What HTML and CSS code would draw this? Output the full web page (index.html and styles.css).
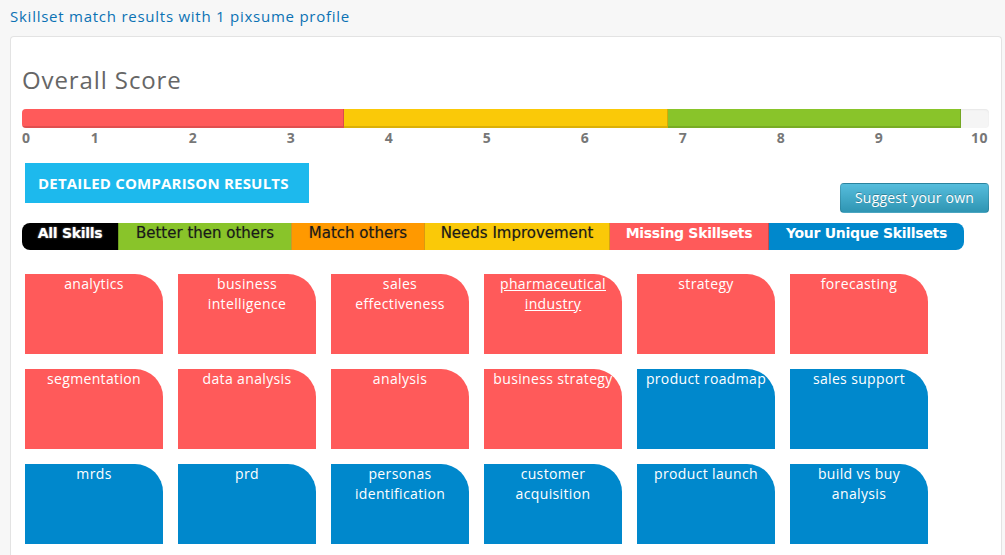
FILE: index.html
```html
<!DOCTYPE html>
<html>
<head>
<meta charset="utf-8">
<link rel="stylesheet" href="styles.css">
</head>
<body>
<div class="page-title">Skillset match results with 1 pixsume profile</div>
<div class="card">
  <h2 class="score-title">Overall Score</h2>
  <div class="bar">
    <div class="seg seg-red" style="width:33.33%"></div>
    <div class="seg seg-yellow" style="width:33.44%"></div>
    <div class="seg seg-green" style="width:30.33%"></div>
  </div>
  <div class="scale">
    <span class="tick first">0</span>
    <span class="tick">1</span>
    <span class="tick">2</span>
    <span class="tick">3</span>
    <span class="tick">4</span>
    <span class="tick">5</span>
    <span class="tick">6</span>
    <span class="tick">7</span>
    <span class="tick">8</span>
    <span class="tick">9</span>
    <span class="tick last">10</span>
  </div>
  <div class="actions">
    <div class="detail-btn">DETAILED COMPARISON RESULTS</div>
    <div class="suggest-btn">Suggest your own</div>
  </div>
  <div class="tabs">
    <div class="tab tab-all">All Skills</div>
    <div class="tab tab-better">Better then others</div>
    <div class="tab tab-match">Match others</div>
    <div class="tab tab-needs">Needs Improvement</div>
    <div class="tab tab-missing">Missing Skillsets</div>
    <div class="tab tab-unique">Your Unique Skillsets</div>
  </div>
  <div class="tiles">
    <div class="tile red">analytics</div>
    <div class="tile red">business intelligence</div>
    <div class="tile red">sales effectiveness</div>
    <div class="tile red"><a href="#">pharmaceutical industry</a></div>
    <div class="tile red">strategy</div>
    <div class="tile red">forecasting</div>
    <div class="tile red">segmentation</div>
    <div class="tile red">data analysis</div>
    <div class="tile red">analysis</div>
    <div class="tile red">business strategy</div>
    <div class="tile blue">product roadmap</div>
    <div class="tile blue">sales support</div>
    <div class="tile blue">mrds</div>
    <div class="tile blue">prd</div>
    <div class="tile blue">personas identification</div>
    <div class="tile blue">customer acquisition</div>
    <div class="tile blue">product launch</div>
    <div class="tile blue">build vs buy analysis</div>
  </div>
</div>
</body>
</html>
```

FILE: styles.css
```css
html, body {
  margin: 0;
  padding: 0;
}
body {
  background: #f7f7f7;
  font-family: "Open Sans", "Noto Sans", sans-serif;
  overflow: hidden;
  height: 555px;
}
.page-title {
  padding: 6px 10px 0 10px;
  height: 24px;
  line-height: 20px;
  font-size: 15px;
  letter-spacing: 0.75px;
  color: #0b72b4;
}
.card {
  margin: 6px 3px 0 10px;
  background: #fff;
  border: 1px solid #e3e3e3;
  border-bottom: none;
  border-radius: 4px 4px 0 0;
  padding: 27px 12px 0 11px;
  height: 492px;
  overflow: hidden;
}
.score-title {
  margin: 0;
  font-size: 24px;
  font-weight: 400;
  letter-spacing: 0.9px;
  line-height: 32px;
  color: #666;
}
.bar {
  margin-top: 13px;
  height: 19px;
  display: flex;
  background: #f5f5f5;
  border-radius: 4px;
  overflow: hidden;
  box-shadow: inset 0 1px 2px rgba(0,0,0,0.06);
}
.seg {
  height: 100%;
  box-sizing: border-box;
  border-bottom: 2px solid rgba(0,0,0,0.12);
  border-right: 1px solid rgba(0,0,0,0.15);
}
.seg-red { background: #ff5a5a; }
.seg-yellow { background: #fac908; }
.seg-green { background: #89c42a; }
.scale {
  display: flex;
  height: 19px;
  line-height: 19px;
  font-size: 14px;
  letter-spacing: 0.5px;
  font-weight: 700;
  color: #777;
}
.tick {
  width: 98px;
  text-align: center;
}
.tick.first {
  width: 24px;
  text-align: left;
}
.tick.last {
  flex: 1;
  text-align: right;
  padding-right: 1px;
}
.actions {
  margin-top: 16px;
  height: 50px;
  display: flex;
  justify-content: space-between;
}
.detail-btn {
  align-self: flex-start;
  margin-left: 3px;
  width: 284px;
  height: 40px;
  box-sizing: border-box;
  padding-left: 13px;
  line-height: 40px;
  background: #1db9ed;
  color: #fff;
  font-size: 15px;
  letter-spacing: 0.2px;
  font-weight: 700;
}
.suggest-btn {
  align-self: flex-end;
  width: 149px;
  height: 30px;
  box-sizing: border-box;
  line-height: 28px;
  text-align: center;
  font-size: 14px;
  letter-spacing: 0.2px;
  color: #fff;
  border-radius: 4px;
  border: 1px solid rgba(0,0,0,0.12);
  background: linear-gradient(#56bddc, #2f95b3);
  text-shadow: 0 -1px 0 rgba(0,0,0,0.25);
}
.tabs {
  margin-top: 10px;
  display: flex;
  height: 27px;
}
.tab {
  height: 27px;
  line-height: 21px;
  text-align: center;
  font-family: "DejaVu Sans", Verdana, sans-serif;
  font-size: 15px;
  color: #1a1a1a;
  box-sizing: border-box;
  text-shadow: 0 0 1px rgba(0,0,0,0.35);
}
.tab-all {
  width: 96px;
  background: #000;
  color: #fff;
  font-size: 14px;
  letter-spacing: -0.3px;
  font-weight: 700;
  border-radius: 8px 0 0 8px;
  text-shadow: 0 0 2px rgba(255,255,255,0.6);
}
.tab-better {
  width: 173px;
  background: #89c42a;
  border-left: 1px solid #6e9e22;
}
.tab-match {
  width: 133px;
  background: #ff9900;
  border-left: 1px solid #c99a2a;
}
.tab-needs {
  width: 185px;
  background: #fac908;
  border-left: 1px solid #d99a10;
}
.tab-missing {
  width: 159px;
  background: #ff5a5a;
  border-left: 1px solid #d7a015;
  color: #fff;
  font-size: 14px;
  letter-spacing: -0.3px;
  font-weight: 700;
  text-shadow: none;
}
.tab-unique {
  width: 196px;
  background: #0088cc;
  border-left: 1px solid #c24d4d;
  color: #fff;
  font-size: 14px;
  letter-spacing: -0.3px;
  font-weight: 700;
  border-radius: 0 8px 8px 0;
  text-shadow: none;
}
.tiles {
  margin: 24px 0 0 3px;
  display: grid;
  grid-template-columns: repeat(6, 138px);
  grid-auto-rows: 80px;
  gap: 15px;
}
.tile {
  color: #fff;
  font-size: 14px;
  letter-spacing: 0.35px;
  line-height: 20px;
  text-align: center;
  border-top-right-radius: 28px;
  padding: 0 8px;
}
.tile a {
  color: #fff;
  text-decoration: underline;
}
.tile.red { background: #ff5a5a; }
.tile.blue { background: #0088cc; }
```
